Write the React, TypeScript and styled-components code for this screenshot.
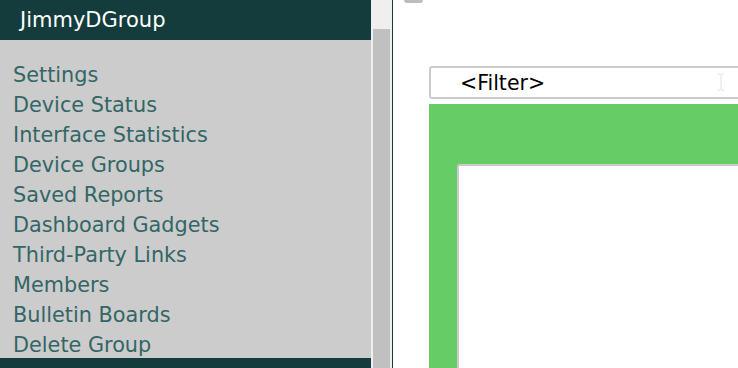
import React from 'react';
import styled, { createGlobalStyle } from 'styled-components';

const colors = {
  teal: '#143c3c',
  panel: '#cccccc',
  link: '#336666',
  track: '#efefef',
  thumb: '#c0c0c0',
  green: '#66cc66',
  line: '#cccccc',
};

const links = [
  'Settings',
  'Device Status',
  'Interface Statistics',
  'Device Groups',
  'Saved Reports',
  'Dashboard Gadgets',
  'Third-Party Links',
  'Members',
  'Bulletin Boards',
  'Delete Group',
];

export default function App() {
  return (
    <>
      <GlobalStyle />
      <Page>
        <Sidebar>
          <GroupTitle>JimmyDGroup</GroupTitle>
          <Nav>
            {links.map((label) => (
              <NavLink key={label}>{label}</NavLink>
            ))}
          </Nav>
          <SidebarFooter />
        </Sidebar>
        <ScrollTrack>
          <ScrollThumb />
        </ScrollTrack>
        <Divider />
        <Main>
          <ButtonStub />
          <FilterBox>
            <FilterText>&lt;Filter&gt;</FilterText>
            <Caret viewBox="0 0 8 18" width="8" height="18">
              <path
                d="M1 1h2.5M4.5 1H7M4 1.5v15M1 17h2.5M4.5 17H7"
                stroke="#e2e2e2"
                strokeWidth="1"
                fill="none"
              />
            </Caret>
          </FilterBox>
          <GreenPanel>
            <ContentCard />
          </GreenPanel>
        </Main>
      </Page>
    </>
  );
}

const GlobalStyle = createGlobalStyle`
  html, body {
    margin: 0;
    padding: 0;
    width: 738px;
    height: 368px;
    overflow: hidden;
    background: #ffffff;
  }
  body {
    font-family: 'DejaVu Sans', Verdana, sans-serif;
  }
`;

const Page = styled.div`
  display: flex;
  width: 738px;
  height: 368px;
  overflow: hidden;
`;

const Sidebar = styled.div`
  width: 371px;
  flex-shrink: 0;
  display: flex;
  flex-direction: column;
  background: ${colors.panel};
`;

const GroupTitle = styled.div`
  height: 40px;
  flex-shrink: 0;
  display: flex;
  align-items: center;
  padding-left: 20px;
  background: ${colors.teal};
  color: #ffffff;
  font-size: 21px;
`;

const Nav = styled.nav`
  height: 318px;
  overflow: hidden;
  padding: 20px 0 0 13px;
  box-sizing: border-box;
  display: flex;
  flex-direction: column;
`;

const NavLink = styled.div`
  height: 30px;
  line-height: 30px;
  flex-shrink: 0;
  color: ${colors.link};
  font-size: 20.8px;
  white-space: nowrap;
`;

const SidebarFooter = styled.div`
  flex: 1;
  background: ${colors.teal};
`;

const ScrollTrack = styled.div`
  width: 21px;
  flex-shrink: 0;
  background: ${colors.track};
  padding: 29px 2px 0 2px;
  box-sizing: border-box;
`;

const ScrollThumb = styled.div`
  height: 100%;
  background: ${colors.thumb};
`;

const Divider = styled.div`
  width: 1px;
  flex-shrink: 0;
  background: ${colors.teal};
`;

const Main = styled.div`
  flex: 1;
  min-width: 0;
  padding-left: 36px;
  display: flex;
  flex-direction: column;
`;

const ButtonStub = styled.div`
  width: 19px;
  height: 3px;
  margin-left: -25px;
  background: #bdbdbd;
  border-radius: 0 0 3px 3px;
`;

const FilterBox = styled.div`
  margin-top: 63px;
  width: 340px;
  height: 33px;
  flex-shrink: 0;
  box-sizing: border-box;
  border: 2px solid ${colors.line};
  border-radius: 3px;
  display: flex;
  align-items: center;
  padding-left: 29px;
  position: relative;
`;

const FilterText = styled.span`
  font-size: 20.5px;
  color: #000000;
`;

const Caret = styled.svg`
  position: absolute;
  left: 286px;
  top: 5px;
`;

const GreenPanel = styled.div`
  margin-top: 5px;
  flex: 1;
  width: 340px;
  background: ${colors.green};
  padding: 60px 0 0 28px;
  box-sizing: border-box;
  display: flex;
`;

const ContentCard = styled.div`
  flex: 1;
  background: #ffffff;
  border-top: 2px solid ${colors.line};
  border-left: 2px solid ${colors.line};
  border-top-left-radius: 3px;
`;
